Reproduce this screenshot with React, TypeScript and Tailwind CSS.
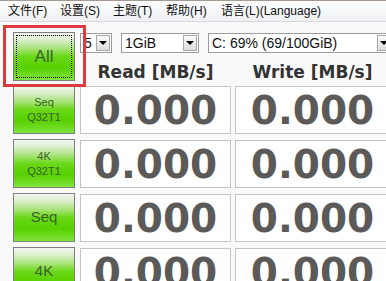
import React from "react";

const rows = [
  { lines: ["Seq", "Q32T1"] },
  { lines: ["4K", "Q32T1"] },
  { lines: ["Seq"] },
  { lines: ["4K"] },
];

const menus = [
  { label: "文件(F)", w: "w-[52px]" },
  { label: "设置(S)", w: "w-[53px]" },
  { label: "主题(T)", w: "w-[53px]" },
  { label: "帮助(H)", w: "w-[55px]" },
  { label: "语言(L)(Language)", w: "w-auto" },
];

const greenBtn =
  "bg-[linear-gradient(to_bottom,#f4f7f0_0%,#dcefd0_14%,#a6e274_34%,#6ad818_50%,#58d000_74%,#80e43e_100%)] border border-[#7e7e7e]";

function Select({ text, w }: { text: string; w: string }) {
  return (
    <div className={`${w} h-[20px] flex items-center justify-between border border-[#9c9c9c] bg-white pl-[3px] pr-[1px]`}>
      <span className="text-[14px] leading-none text-[#111] whitespace-nowrap">{text}</span>
      <span className="w-[14px] h-[16px] flex items-center justify-center border border-[#a9a9a9] bg-[linear-gradient(to_bottom,#fbfbfb,#dcdcdc)] shrink-0">
        <span className="w-0 h-0 border-l-[4px] border-r-[4px] border-t-[4px] border-l-transparent border-r-transparent border-t-black" />
      </span>
    </div>
  );
}

function Value() {
  return (
    <span className="text-[39px] leading-none font-bold text-[#5b5a58] [font-family:'DejaVu_Sans',sans-serif]">
      0.000
    </span>
  );
}

export default function App() {
  return (
    <div className="relative w-[386px] h-[281px] overflow-hidden bg-[#f9f9f9] [font-family:'Liberation_Sans','Noto_Sans_CJK_SC',sans-serif]">
      {/* menu bar */}
      <div className="h-[22px] flex items-center pl-[8px] border-t border-[#a39a90] border-b border-b-[#d9d9d9] bg-[linear-gradient(to_bottom,#fdfdfd,#eef0f3)]">
        {menus.map((m) => (
          <span key={m.label} className={`${m.w} text-[12px] text-[#111] whitespace-nowrap`}>
            {m.label}
          </span>
        ))}
      </div>

      <div className="pl-[13px] pt-[10px] flex flex-col">
        {/* top row */}
        <div className="flex gap-[5px] h-[49px]">
          <button className={`w-[62px] h-[49px] shrink-0 p-[2px] ${greenBtn}`}>
            <div className="w-full h-full border border-dotted border-black flex items-center justify-center">
              <span className="text-[17px] text-[#3b6530]">All</span>
            </div>
          </button>
          <div className="flex flex-col w-[320px]">
            <div className="flex gap-[9px] mt-[1px]">
              <Select text="5" w="w-[32px]" />
              <Select text="1GiB" w="w-[78px]" />
              <Select text="C: 69% (69/100GiB)" w="w-[185px]" />
            </div>
            <div className="flex gap-[4px] mt-[7px] text-[17px] font-bold text-[#333] [font-family:'DejaVu_Sans',sans-serif]">
              <div className="w-[151px] text-center">Read [MB/s]</div>
              <div className="w-[155px] text-center">Write [MB/s]</div>
            </div>
          </div>
        </div>

        {/* result rows */}
        <div className="flex flex-col gap-[5px] mt-[4px]">
          {rows.map((r, i) => (
            <div key={i} className="flex gap-[5px] h-[49px]">
              <button className={`w-[62px] h-[49px] shrink-0 flex flex-col items-center justify-center ${greenBtn}`}>
                {r.lines.map((l) => (
                  <span
                    key={l}
                    className={`${r.lines.length > 1 ? "text-[11px] leading-[15px]" : "text-[15px]"} text-[#3a612c]`}
                  >
                    {l}
                  </span>
                ))}
              </button>
              <div className="w-[151px] shrink-0 mt-[1px] h-[48px] bg-white border border-[#c4c4c4] flex items-center justify-center">
                <Value />
              </div>
              <div className="w-[155px] shrink-0 ml-[-1px] mt-[1px] h-[48px] bg-white border border-[#c4c4c4] flex items-center justify-center">
                <Value />
              </div>
            </div>
          ))}
        </div>
      </div>

      {/* highlight annotation */}
      <div className="absolute left-[3px] top-[25px] w-[83px] h-[62px] border-[3px] border-[#dc3a3c]" />
    </div>
  );
}
